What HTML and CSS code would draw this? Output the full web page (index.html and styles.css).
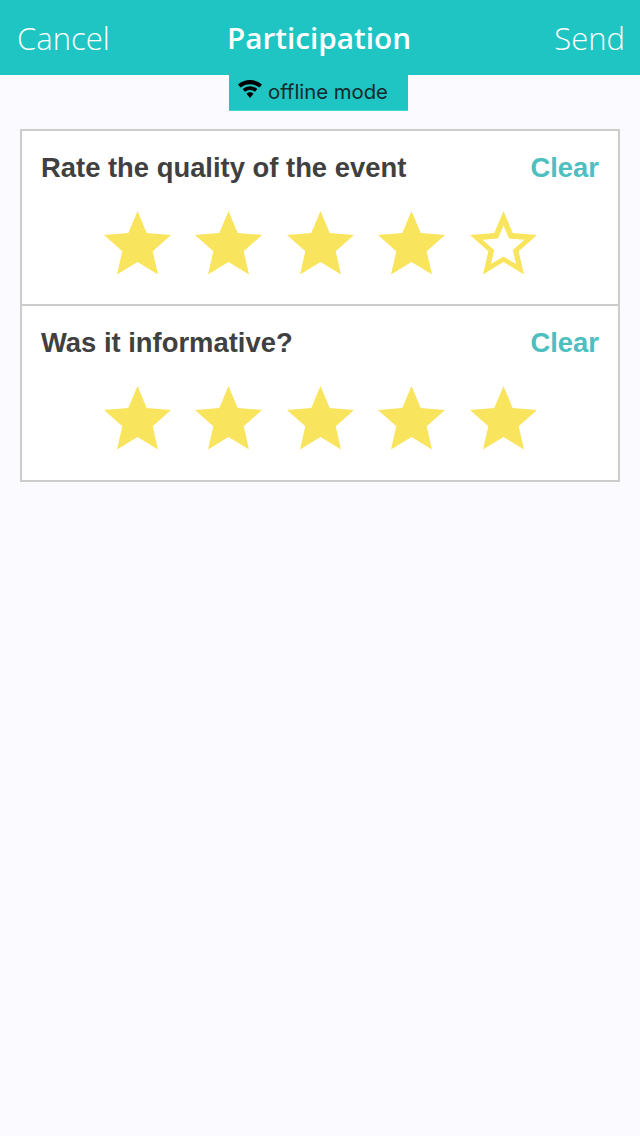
FILE: index.html
```html
<!DOCTYPE html>
<html lang="en">
<head>
  <meta charset="UTF-8" />
  <meta name="viewport" content="width=device-width, initial-scale=1.0"/>
  <title>Participation</title>
  <link rel="stylesheet" href="styles.css">
</head>
<body>
  <svg class="defs" width="0" height="0">
    <symbol id="star" viewBox="0 0 67 64">
      <polygon points="33.5,0 42.7,22 67,24 48.7,40.3 54,63.6 33.5,51 13,63.6 18.3,40.3 0,24 24.3,22"/>
    </symbol>
    <symbol id="star-empty" viewBox="0 0 67 64">
      <path fill-rule="evenodd" d="M33.5 0 42.7 22 67 24 48.7 40.3 54 63.6 33.5 51 13 63.6 18.3 40.3 0 24 24.3 22ZM33.5 14.5 28 27.6 12.5 28.8 24.2 39 21 53 33.5 45.6 46 53 42.8 39 54.5 28.8 39 27.6Z"/>
    </symbol>
  </svg>

  <div class="topbar">
    <span class="topbar-btn">Cancel</span>
    <span class="topbar-title">Participation</span>
    <span class="topbar-btn topbar-send">Send</span>
  </div>

  <div class="offline">
    <svg class="wifi" viewBox="0 0 24 18">
      <path d="M0 4.6A18 18 0 0 1 24 4.6L21.4 7.6A14.5 14.5 0 0 0 2.6 7.6Z"/>
      <path d="M4.6 9A11 11 0 0 1 19.4 9L17 11.8A7.5 7.5 0 0 0 7 11.8Z"/>
      <path d="M12 18 8.5 13.8A5 5 0 0 1 15.5 13.8Z"/>
    </svg>
    <span>offline mode</span>
  </div>

  <div class="card">
    <div class="question">
      <div class="question-head">
        <span class="question-text">Rate the quality of the event</span>
        <span class="clear">Clear</span>
      </div>
      <div class="stars">
        <svg class="star"><use href="#star"/></svg>
        <svg class="star"><use href="#star"/></svg>
        <svg class="star"><use href="#star"/></svg>
        <svg class="star"><use href="#star"/></svg>
        <svg class="star"><use href="#star-empty"/></svg>
      </div>
    </div>
    <div class="question">
      <div class="question-head">
        <span class="question-text">Was it informative?</span>
        <span class="clear">Clear</span>
      </div>
      <div class="stars">
        <svg class="star"><use href="#star"/></svg>
        <svg class="star"><use href="#star"/></svg>
        <svg class="star"><use href="#star"/></svg>
        <svg class="star"><use href="#star"/></svg>
        <svg class="star"><use href="#star"/></svg>
      </div>
    </div>
  </div>
</body>
</html>
```

FILE: styles.css
```css
body { margin: 0; background: #fbfbff; font-family: "Liberation Sans", Arial, sans-serif; }
.defs { display: block; height: 0; }

.topbar { height: 75px; background: #1fc5c3; color: white; display: grid; grid-template-columns: 1fr auto 1fr; align-items: center; padding: 0 15px; font-family: "Open Sans", sans-serif; font-size: 29.7px; }
.topbar-btn { font-weight: 300; font-size: 31px; padding-left: 2px; }
.topbar-send { text-align: right; }
.topbar-title { font-weight: 600; margin-left: -2px; }

.offline { box-sizing: border-box; width: 179px; height: 36px; margin-left: 229px; background: #1fc5c3; border-bottom: 1px solid #3fd8d6; color: #14292c; display: flex; align-items: center; gap: 6px; padding: 0 0 2px 9px; font-family: Inter, sans-serif; font-size: 20.3px; }
.wifi { width: 24px; height: 18px; margin-top: -6px; }

.card { margin: 18px 20px 0; background: white; border: 2px solid #cccccc; }
.question { padding: 21px 19px 0; height: 152px; }
.question:first-child { border-bottom: 2px solid #cccccc; }
.question:last-child { height: 153px; }
.question-head { display: flex; justify-content: space-between; align-items: center; font-size: 27.4px; font-weight: bold; color: #404040; }
.clear { color: #4dbfbf; }

.stars { display: flex; justify-content: center; gap: 24.5px; margin-top: 27px; }
.star { width: 67px; height: 64px; fill: #f9e45e; }
```
